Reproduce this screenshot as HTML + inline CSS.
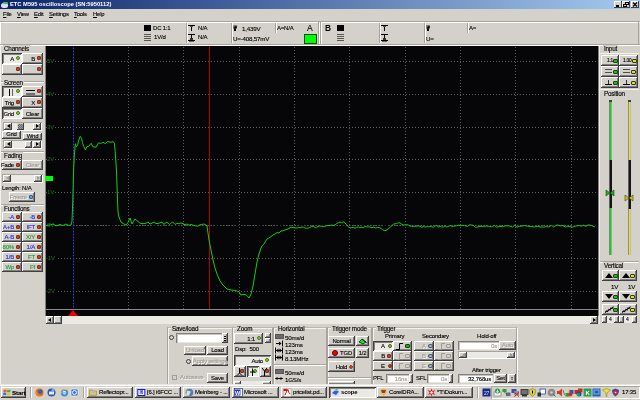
<!DOCTYPE html>
<html><head><meta charset="utf-8">
<style>
*{margin:0;padding:0;box-sizing:border-box}
html,body{width:640px;height:400px;overflow:hidden;background:#d4d1ca;font-family:"Liberation Sans",sans-serif;font-size:6px;letter-spacing:-0.2px;-webkit-text-stroke:0.12px currentColor;color:#000;position:relative}
.a{position:absolute}
#title{left:0;top:0;width:640px;height:9px;background:linear-gradient(90deg,#0a246a 0%,#a6caf0 100%)}
#title .t{left:10px;top:0px;color:#fff;font-weight:bold;font-size:5.75px;line-height:9px;white-space:nowrap;letter-spacing:0px;-webkit-text-stroke:0}
.wb{top:1px;width:8px;height:7px;background:#d4d0c8;box-shadow:inset -1px -1px #404040,inset 1px 1px #fff}
.m{top:8px;line-height:12px;font-size:5.9px;white-space:nowrap}
.hl{height:1px}
.btn{background:#d4d1ca;box-shadow:inset -1px -1px #404040,inset 1px 1px #fff,inset -2px -2px #808080}
.prs{background:#ebe9e4;box-shadow:inset 1px 1px #404040,inset -1px -1px #fff,inset 2px 2px #808080}
.led{width:4px;height:4px;border-radius:1px;background:#f03000;border:1px solid #6a3a30}
.lg{background:#80e000;border-color:#507030;border-radius:50%}
.ly{background:#f0e000;border-color:#707030}
.lb{background:#60a0e0;border-color:#406080}
.lo{background:#d08060;border-color:#a09080}
.gb{border:1px solid #a8a49c;border-top-color:#bcb8b0;box-shadow:inset 1px 1px #f4f2ee,1px 1px #fff}
.lbl{background:#d4d1ca;padding:0 1px;line-height:7px;font-size:6.3px;white-space:nowrap;color:#000}
.vl{color:#1a7a1a;font-size:6px;line-height:7px;-webkit-text-stroke:0;background:#060508;padding-right:1px}
.txt{white-space:nowrap;line-height:7px}
.tb{}
</style></head><body style="will-change:transform">
<div id="title" class="a">
  <div class="a" style="left:1px;top:3px;width:7px;height:5px;border-radius:3px 2px 3px 3px;background:#e0dcf0"></div>
  <div class="a" style="left:3px;top:2px;width:4px;height:2px;background:#6a9ad0;border-radius:1px"></div>
  <div class="a" style="left:5px;top:2px;width:3px;height:2px;background:#20d020;border-radius:1px"></div>
  <div class="a t">ETC M595 oscilloscope (SN:5950112)</div>
  <div class="a wb" style="left:614px"><div class="a" style="left:2px;top:4px;width:3px;height:2px;background:#000"></div></div>
  <div class="a wb" style="left:622px"><div class="a" style="left:3px;top:1px;width:4px;height:3px;border:1px solid #000;border-top-width:1.5px"></div><div class="a" style="left:1px;top:3px;width:4px;height:3px;border:1px solid #000;background:#d4d0c8"></div></div>
  <div class="a wb" style="left:631px"><svg class="a" style="left:1px;top:1px" width="6" height="5"><path d="M1,0.5 L5,4.5 M5,0.5 L1,4.5" stroke="#000" stroke-width="1.1"/></svg></div>
</div>
<div class="a m" style="left:3px"><u>F</u>ile</div>
<div class="a m" style="left:17px"><u>V</u>iew</div>
<div class="a m" style="left:34px"><u>E</u>dit</div>
<div class="a m" style="left:49px"><u>S</u>ettings</div>
<div class="a m" style="left:74px"><u>T</u>ools</div>
<div class="a m" style="left:93px"><u>H</u>elp</div>
<div class="a hl" style="left:0;top:21px;width:640px;background:#a8a49c"></div>
<div class="a hl" style="left:0;top:22px;width:640px;background:#fff"></div>
<div class="a hl" style="left:0;top:44px;width:640px;background:#a8a49c"></div>
<div class="a hl" style="left:0;top:45px;width:640px;background:#fff"></div>
<div class="a" style="left:45px;top:46px;width:1px;height:270px;background:#808080"></div>
<div class="a" style="left:46px;top:46px;width:552px;height:270px;background:#060508"></div>
<svg class="a" style="left:0;top:0" width="640" height="400">
 <g stroke="#5e5c5e" stroke-width="1" stroke-dasharray="1 2" shape-rendering="crispEdges"><line x1="128.5" y1="47" x2="128.5" y2="309"/><line x1="183.5" y1="47" x2="183.5" y2="309"/><line x1="239.5" y1="47" x2="239.5" y2="309"/><line x1="294.5" y1="47" x2="294.5" y2="309"/><line x1="349.5" y1="47" x2="349.5" y2="309"/><line x1="405.5" y1="47" x2="405.5" y2="309"/><line x1="460.5" y1="47" x2="460.5" y2="309"/><line x1="515.5" y1="47" x2="515.5" y2="309"/><line x1="571.5" y1="47" x2="571.5" y2="309"/><line x1="46" y1="61.5" x2="598" y2="61.5"/><line x1="46" y1="94.5" x2="598" y2="94.5"/><line x1="46" y1="127.5" x2="598" y2="127.5"/><line x1="46" y1="159.5" x2="598" y2="159.5"/><line x1="46" y1="192.5" x2="598" y2="192.5"/><line x1="46" y1="225.5" x2="598" y2="225.5"/><line x1="46" y1="258.5" x2="598" y2="258.5"/><line x1="46" y1="291.5" x2="598" y2="291.5"/></g>
 <line x1="73.5" y1="46" x2="73.5" y2="309" stroke="#505050" stroke-width="1"/><line x1="73.5" y1="46" x2="73.5" y2="309" stroke="#1010a8" stroke-width="1" stroke-dasharray="2 1" shape-rendering="crispEdges"/>
 <line x1="46" y1="225.5" x2="598" y2="225.5" stroke="#206020" stroke-width="1" stroke-dasharray="2 5" stroke-dashoffset="1"/><line x1="46" y1="225.5" x2="598" y2="225.5" stroke="#601870" stroke-width="1" stroke-dasharray="1 6" stroke-dashoffset="4"/>
 <line x1="209.5" y1="46" x2="209.5" y2="309" stroke="#b00000" stroke-width="1"/>
 <line x1="46" y1="309.5" x2="598" y2="309.5" stroke="#8a8a8a" stroke-width="1"/>
 <polygon points="73,310 68,316 78,316" fill="#f00000"/>
</svg>
<div class="a vl" style="top:58px;left:47px">5V</div><div class="a vl" style="top:91px;left:47px">4V</div><div class="a vl" style="top:124px;left:47px">3V</div><div class="a vl" style="top:156px;left:47px">2V</div><div class="a vl" style="top:189px;left:47px">1V</div><div class="a vl" style="top:222px;left:47px">0V</div><div class="a vl" style="top:255px;left:46px">-1V</div><div class="a vl" style="top:288px;left:46px">-2V</div>
<svg class="a" style="left:0;top:0" width="640" height="400">
 <polyline points="46.0,225.5 50.0,225.0 53.0,224.0 56.0,226.0 60.0,224.5 63.0,225.5 66.0,224.0 69.0,225.5 71.0,225.0 72.0,221.0 72.8,200.0 73.6,170.0 74.3,156.0 75.0,147.0 75.4,143.7 76.3,146.8 77.6,145.5 78.5,141.0 80.2,136.3 81.6,138.5 82.4,142.4 83.7,146.4 85.5,149.9 86.8,146.8 88.6,146.4 91.2,143.3 92.9,146.8 96.0,147.2 98.6,142.9 101.2,143.3 103.0,142.4 105.6,143.6 107.4,141.6 110.9,142.2 113.1,141.6 114.4,143.3 115.2,151.6 116.5,171.0 117.5,200.0 118.0,211.0 118.4,215.0 119.0,217.0 120.0,219.6 121.0,222.0 123.0,223.5 126.0,225.0 128.0,222.6 130.0,218.0 132.0,224.0 133.5,221.4 135.0,219.0 136.5,220.2 138.0,221.4 139.5,222.7 141.0,223.5 143.0,223.7 145.0,223.5 146.5,222.9 148.0,222.0 150.0,224.0 152.0,223.2 154.0,222.0 156.0,223.5 158.0,223.5 160.0,222.8 162.0,222.0 163.8,224.4 165.3,223.2 166.9,222.2 169.4,224.4 170.9,223.5 172.5,221.9 175.0,224.4 176.9,223.5 178.8,223.5 180.9,223.1 183.1,223.5 185.0,224.8 186.9,224.0 189.1,225.1 191.2,224.4 193.0,225.2 195.2,225.8 197.5,226.2 200.0,224.8 201.9,224.5 203.8,224.0 205.6,224.8 207.0,226.0 209.0,240.0 211.0,250.0 213.0,260.0 215.0,268.0 217.0,274.0 220.0,281.0 223.0,285.0 227.0,289.0 231.0,290.0 235.0,290.4 239.0,291.6 240.6,295.0 245.0,294.4 247.0,295.6 249.0,298.0 251.0,294.0 253.0,286.0 255.0,274.0 257.0,262.0 259.0,254.0 261.0,248.0 262.5,245.1 264.0,244.0 265.5,241.3 267.0,239.0 269.0,238.0 271.0,236.6 273.0,235.0 275.0,234.0 277.0,232.6 279.0,233.0 281.0,231.0 283.0,230.7 285.0,230.0 287.0,229.4 289.0,228.4 291.0,227.2 293.0,227.6 295.0,228.0 297.0,228.0 298.7,227.6 300.3,227.7 302.0,227.0 303.5,227.2 305.0,228.0 306.7,228.2 308.3,228.1 310.0,227.5 311.6,226.4 313.2,226.3 314.8,227.2 316.4,227.5 318.0,226.5 319.8,226.0 321.5,226.3 323.2,226.5 325.0,226.2 326.7,225.7 328.3,225.6 330.0,225.3 331.7,225.2 333.3,225.4 335.0,225.0 336.7,223.6 338.3,222.8 340.0,222.0 341.7,222.8 343.3,221.8 345.0,223.0 346.7,224.8 348.3,226.8 350.0,228.0 351.7,227.6 353.3,227.3 355.0,228.3 356.7,227.2 358.3,227.0 360.0,227.5 361.7,227.3 363.3,227.7 365.0,226.5 366.7,226.8 368.3,226.8 370.0,227.0 371.9,227.7 373.8,227.1 375.6,228.0 377.5,227.5 379.2,227.5 380.9,228.4 382.6,229.6 384.3,230.6 386.0,230.5 388.0,228.9 390.0,227.5 391.7,225.8 393.3,224.3 395.0,223.8 396.7,223.6 398.3,222.7 400.0,223.0 401.7,224.2 403.3,224.9 405.0,225.0 406.7,224.6 408.3,225.0 410.0,226.2 411.7,226.1 413.3,226.6 415.0,226.2 416.7,226.1 418.3,225.8 420.0,226.3 421.7,227.3 423.3,226.5 425.0,227.0 426.7,226.6 428.3,226.7 430.0,226.6 431.7,226.5 433.3,227.3 435.0,225.9 436.7,225.5 438.3,227.1 440.0,226.2 441.7,226.9 443.3,227.0 445.0,225.9 446.7,226.8 448.3,226.7 450.0,225.4 451.7,226.3 453.3,226.4 455.0,226.0 456.7,225.7 458.3,225.2 460.0,225.5 462.0,225.3 464.8,225.7 467.7,226.3 469.8,224.7 473.1,225.4 475.4,227.3 478.1,226.9 480.8,226.4 483.1,226.4 486.4,226.1 489.5,226.4 491.6,226.7 494.5,225.5 496.5,227.0 499.2,226.6 502.5,226.6 505.9,225.7 509.1,225.9 512.5,227.0 514.7,225.1 517.0,227.2 519.7,226.3 522.1,226.0 524.7,225.6 527.6,226.2 530.9,226.5 534.3,226.9 537.8,226.4 540.0,226.9 543.5,227.1 546.3,226.6 548.7,226.9 551.5,225.4 553.6,226.9 557.1,224.9 560.3,225.8 562.5,225.5 565.7,227.0 567.7,226.3 569.8,226.6 572.3,227.0 575.8,226.0 579.3,225.5 581.4,226.3 583.4,225.2 586.1,226.3 588.3,224.8 591.6,225.5 595.0,227.0" fill="none" stroke="#10d010" stroke-width="1"/>
</svg>
<div class="a" style="left:45px;top:176px;width:8px;height:5px;background:#00ff00"></div>
<div class="a lbl" style="left:3px;top:45px">Channels</div><div class="a btn prs" style="left:2px;top:53px;width:20px;height:11px;"><div class="a txt" style="right:8px;top:3px;">A</div><div class="a led lg" style="left:14px;top:3px"></div></div><div class="a btn" style="left:22px;top:53px;width:21px;height:11px;"><div class="a txt" style="right:8px;top:3px;">B</div><div class="a led" style="left:15px;top:3px"></div></div><div class="a btn" style="left:2px;top:64px;width:20px;height:11px;"><div class="a led" style="left:14px;top:3px"></div></div><div class="a btn" style="left:22px;top:64px;width:21px;height:11px;"><div class="a led" style="left:15px;top:3px"></div></div><div class="a " style="left:1px;top:81px;width:43px;height:1px;background:#a8a49c"></div><div class="a " style="left:1px;top:82px;width:43px;height:1px;background:#fff"></div><div class="a lbl" style="left:3px;top:79px">Screen</div><div class="a btn prs" style="left:2px;top:86px;width:20px;height:11px;"><div class="a led lg" style="left:14px;top:3px"></div></div><div class="a " style="left:9px;top:89px;width:1px;height:7px;background:#000"></div><div class="a " style="left:12px;top:89px;width:1px;height:7px;background:#606060"></div><div class="a btn" style="left:22px;top:86px;width:21px;height:11px;"><div class="a led" style="left:15px;top:3px"></div></div><div class="a " style="left:26px;top:90px;width:9px;height:1px;background:#000"></div><div class="a " style="left:26px;top:93px;width:9px;height:2px;background:#707070"></div><div class="a btn" style="left:2px;top:97px;width:20px;height:11px;"><div class="a txt" style="right:8px;top:3px;">Trig</div><div class="a led" style="left:14px;top:3px"></div></div><div class="a btn" style="left:22px;top:97px;width:21px;height:11px;"><div class="a txt" style="right:8px;top:3px;">X</div><div class="a led" style="left:15px;top:3px"></div></div><div class="a btn prs" style="left:2px;top:108px;width:20px;height:11px;"><div class="a txt" style="right:8px;top:3px;">Grid</div><div class="a led lg" style="left:14px;top:3px"></div></div><div class="a btn" style="left:22px;top:108px;width:21px;height:11px;"><div class="a txt" style="left:0;right:0;top:3px;text-align:center;">Clear</div></div><div class="a " style="left:3px;top:122px;width:39px;height:9px;background:#ebe9e4;box-shadow:inset 1px 1px #a8a49c,inset -1px -1px #fff"></div><div class="a btn" style="left:4px;top:123px;width:8px;height:7px;"><div class="a" style="left:3px;top:1px;width:0;height:0;border-top:2px solid transparent;border-bottom:2px solid transparent;border-right:3px solid #000"></div></div><div class="a btn" style="left:33px;top:123px;width:8px;height:7px;"><div class="a" style="left:3px;top:1px;width:0;height:0;border-top:2px solid transparent;border-bottom:2px solid transparent;border-left:3px solid #000"></div></div><div class="a " style="left:17px;top:123px;width:7px;height:7px;background:repeating-conic-gradient(#6a6a6a 0 25%,#9a9a9a 0 50%) 0 0/2px 2px;box-shadow:inset -1px -1px #404040,inset 1px 1px #d0d0d0"></div><div class="a btn" style="left:2px;top:131px;width:19px;height:8px;"><div class="a txt" style="left:0;right:0;top:0;text-align:center">Grid</div></div><div class="a btn" style="left:23px;top:133px;width:19px;height:7px;"><div class="a txt" style="left:0;right:0;top:0;text-align:center">Wnd</div></div><div class="a " style="left:3px;top:140px;width:39px;height:9px;background:#ebe9e4;box-shadow:inset 1px 1px #a8a49c,inset -1px -1px #fff"></div><div class="a btn" style="left:4px;top:141px;width:8px;height:7px;"><div class="a" style="left:3px;top:1px;width:0;height:0;border-top:2px solid transparent;border-bottom:2px solid transparent;border-right:3px solid #000"></div></div><div class="a btn" style="left:33px;top:141px;width:8px;height:7px;"><div class="a" style="left:3px;top:1px;width:0;height:0;border-top:2px solid transparent;border-bottom:2px solid transparent;border-left:3px solid #000"></div></div><div class="a btn" style="left:25px;top:141px;width:7px;height:7px;"></div><div class="a " style="left:1px;top:151px;width:43px;height:1px;background:#a8a49c"></div><div class="a " style="left:1px;top:152px;width:43px;height:1px;background:#fff"></div><div class="a lbl" style="left:3px;top:152px">Fading</div><div class="a btn" style="left:2px;top:160px;width:20px;height:10px;"><div class="a txt" style="right:8px;top:2px;">Fade</div><div class="a led" style="left:14px;top:3px"></div></div><div class="a btn" style="left:22px;top:160px;width:21px;height:10px;"><div class="a txt" style="left:0;right:0;top:2px;text-align:center;color:#a09c94;text-shadow:1px 1px #fff;">Clear</div></div><div class="a " style="left:2px;top:174px;width:41px;height:9px;background:#ebe9e4;box-shadow:inset 1px 1px #a8a49c,inset -1px -1px #fff"></div><div class="a btn" style="left:3px;top:175px;width:8px;height:7px;"><div class="a" style="left:3px;top:1px;width:0;height:0;border-top:2px solid transparent;border-bottom:2px solid transparent;border-right:3px solid #a09c94"></div></div><div class="a btn" style="left:34px;top:175px;width:8px;height:7px;"><div class="a" style="left:3px;top:1px;width:0;height:0;border-top:2px solid transparent;border-bottom:2px solid transparent;border-left:3px solid #a09c94"></div></div><div class="a txt" style="left:2px;top:185px">Length: N/A</div><div class="a btn" style="left:9px;top:192px;width:26px;height:10px;"><div class="a txt" style="right:8px;top:2px;color:#a09c94;text-shadow:1px 1px #fff;">Freeze</div><div class="a led lb" style="left:20px;top:3px"></div></div><div class="a " style="left:1px;top:204px;width:43px;height:1px;background:#a8a49c"></div><div class="a " style="left:1px;top:205px;width:43px;height:1px;background:#fff"></div><div class="a lbl" style="left:3px;top:205px">Functions</div><div class="a btn" style="left:2px;top:212px;width:20px;height:10px;"><div class="a txt" style="right:8px;top:2px;color:#2a2ae8;">-A</div><div class="a led" style="left:14px;top:3px"></div></div><div class="a btn" style="left:22px;top:212px;width:21px;height:10px;"><div class="a txt" style="right:8px;top:2px;color:#2a2ae8;">-B</div><div class="a led" style="left:15px;top:3px"></div></div><div class="a btn" style="left:2px;top:222px;width:20px;height:10px;"><div class="a txt" style="right:8px;top:2px;color:#2a2ae8;">A+B</div><div class="a led" style="left:14px;top:3px"></div></div><div class="a btn" style="left:22px;top:222px;width:21px;height:10px;"><div class="a txt" style="right:8px;top:2px;color:#2a2ae8;">IFT</div><div class="a led" style="left:15px;top:3px"></div></div><div class="a btn" style="left:2px;top:232px;width:20px;height:10px;"><div class="a txt" style="right:8px;top:2px;color:#2a2ae8;">A-B</div><div class="a led" style="left:14px;top:3px"></div></div><div class="a btn" style="left:22px;top:232px;width:21px;height:10px;"><div class="a txt" style="right:8px;top:2px;color:#1f9a2a;">X/Y</div><div class="a led" style="left:15px;top:3px"></div></div><div class="a btn" style="left:2px;top:242px;width:20px;height:10px;"><div class="a txt" style="right:8px;top:2px;color:#1f9a2a;">80%</div><div class="a led" style="left:14px;top:3px"></div></div><div class="a btn" style="left:22px;top:242px;width:21px;height:10px;"><div class="a txt" style="right:8px;top:2px;color:#2a2ae8;">1/A</div><div class="a led" style="left:15px;top:3px"></div></div><div class="a btn" style="left:2px;top:252px;width:20px;height:10px;"><div class="a txt" style="right:8px;top:2px;color:#2a2ae8;">1/B</div><div class="a led" style="left:14px;top:3px"></div></div><div class="a btn" style="left:22px;top:252px;width:21px;height:10px;"><div class="a txt" style="right:8px;top:2px;color:#1f9a2a;">FT</div><div class="a led" style="left:15px;top:3px"></div></div><div class="a btn" style="left:2px;top:262px;width:20px;height:10px;"><div class="a txt" style="right:8px;top:2px;color:#1f9a2a;">Wp</div><div class="a led" style="left:14px;top:3px"></div></div><div class="a btn" style="left:22px;top:262px;width:21px;height:10px;"><div class="a txt" style="right:8px;top:2px;color:#1f9a2a;">Ff</div><div class="a led" style="left:15px;top:3px"></div></div><div class="a " style="left:0px;top:22px;width:1px;height:22px;background:#fff"></div><div class="a " style="left:0px;top:46px;width:1px;height:338px;background:#f4f2ee"></div><div class="a " style="left:186px;top:23px;width:1px;height:20px;background:#a8a49c"></div><div class="a " style="left:187px;top:23px;width:1px;height:20px;background:#fff"></div><div class="a " style="left:231px;top:23px;width:1px;height:20px;background:#a8a49c"></div><div class="a " style="left:232px;top:23px;width:1px;height:20px;background:#fff"></div><div class="a " style="left:275px;top:23px;width:1px;height:10px;background:#a8a49c"></div><div class="a " style="left:276px;top:23px;width:1px;height:10px;background:#fff"></div><div class="a " style="left:318px;top:22px;width:1px;height:22px;background:#a8a49c"></div><div class="a " style="left:319px;top:22px;width:1px;height:22px;background:#fff"></div><div class="a " style="left:320px;top:22px;width:1px;height:22px;background:#a8a49c"></div><div class="a " style="left:321px;top:23px;width:1px;height:21px;background:#fff"></div><div class="a " style="left:379px;top:23px;width:1px;height:20px;background:#a8a49c"></div><div class="a " style="left:380px;top:23px;width:1px;height:20px;background:#fff"></div><div class="a " style="left:424px;top:23px;width:1px;height:20px;background:#a8a49c"></div><div class="a " style="left:425px;top:23px;width:1px;height:20px;background:#fff"></div><div class="a " style="left:467px;top:23px;width:1px;height:10px;background:#a8a49c"></div><div class="a " style="left:468px;top:23px;width:1px;height:10px;background:#fff"></div><div class="a " style="left:638px;top:22px;width:1px;height:22px;background:#a8a49c"></div><div class="a " style="left:144px;top:25px;width:7px;height:6px;background:#000"></div><div class="a " style="left:144px;top:34px;width:7px;height:8px;background:repeating-linear-gradient(180deg,#555 0 1px,transparent 1px 2px)"></div><div class="a txt tb" style="left:153px;top:25px">DC 1:1</div><div class="a txt tb" style="left:154px;top:34px">1V/d</div><div class="a " style="left:188px;top:25px;width:7px;height:1px;background:#000"></div><div class="a " style="left:191px;top:25px;width:1px;height:6px;background:#000"></div><div class="a " style="left:190px;top:26px;width:3px;height:1px;background:#555"></div><div class="a " style="left:188px;top:34px;width:7px;height:1px;background:#000"></div><div class="a " style="left:191px;top:34px;width:1px;height:6px;background:#000"></div><div class="a " style="left:188px;top:40px;width:7px;height:1px;background:#000"></div><div class="a " style="left:189px;top:41px;width:5px;height:1px;background:#666"></div><div class="a " style="left:190px;top:38px;width:3px;height:2px;background:#333"></div><div class="a txt tb" style="left:198px;top:25px">N/A</div><div class="a txt tb" style="left:198px;top:34px">N/A</div><div class="a " style="left:233px;top:25px;width:4px;height:4px;border-radius:50%;background:#000;box-shadow:inset 1px 1px #888"></div><div class="a " style="left:234px;top:29px;width:2px;height:2px;background:#000"></div><div class="a txt" style="left:242px;top:25px;font-size:6.2px">1,439V</div><div class="a txt" style="left:233px;top:35px;font-size:6.2px">U=-408,57mV</div><div class="a txt" style="left:277px;top:25px">A=N/A</div><div class="a" style="left:307px;top:24px;font-size:8.6px;line-height:9px;letter-spacing:0;-webkit-text-stroke:0.1px #000">A</div><div class="a " style="left:304px;top:34px;width:13px;height:10px;background:#00ff00;border:1px solid #1a4a1a"></div><div class="a" style="left:325px;top:24px;font-size:8.4px;line-height:9px;font-weight:bold;letter-spacing:0;-webkit-text-stroke:0">B</div><div class="a " style="left:337px;top:25px;width:7px;height:6px;background:#000"></div><div class="a " style="left:337px;top:34px;width:7px;height:8px;background:repeating-linear-gradient(180deg,#555 0 1px,transparent 1px 2px)"></div><div class="a " style="left:381px;top:25px;width:7px;height:1px;background:#000"></div><div class="a " style="left:384px;top:25px;width:1px;height:6px;background:#000"></div><div class="a " style="left:383px;top:26px;width:3px;height:1px;background:#555"></div><div class="a " style="left:381px;top:34px;width:7px;height:1px;background:#000"></div><div class="a " style="left:384px;top:34px;width:1px;height:6px;background:#000"></div><div class="a " style="left:381px;top:40px;width:7px;height:1px;background:#000"></div><div class="a " style="left:382px;top:41px;width:5px;height:1px;background:#666"></div><div class="a " style="left:383px;top:38px;width:3px;height:2px;background:#333"></div><div class="a " style="left:426px;top:25px;width:4px;height:4px;border-radius:50%;background:#000;box-shadow:inset 1px 1px #888"></div><div class="a " style="left:427px;top:29px;width:2px;height:2px;background:#000"></div><div class="a txt" style="left:426px;top:35px;font-size:6.2px">U=</div><div class="a txt" style="left:469px;top:25px">A=</div><div class="a " style="left:598px;top:46px;width:1px;height:270px;background:#808080"></div><div class="a " style="left:599px;top:46px;width:1px;height:278px;background:#f0eee8"></div><div class="a lbl" style="left:603px;top:45px">Input</div><div class="a " style="left:600px;top:53px;width:39px;height:1px;background:#f4f2ee"></div><div class="a btn" style="left:601px;top:55px;width:18px;height:11px;"></div><div class="a txt" style="left:607px;top:57px;font-size:4.8px">1:1</div><div class="a " style="left:613px;top:59px;width:5px;height:4px;background:#00d000;border:1px solid #303820;border-radius:1px"></div><div class="a btn" style="left:619px;top:55px;width:19px;height:11px;"></div><div class="a txt" style="left:623px;top:57px;font-size:4.8px">1:30</div><div class="a " style="left:632px;top:59px;width:5px;height:4px;background:#e8e000;border:1px solid #303820;border-radius:1px"></div><div class="a btn" style="left:601px;top:66px;width:18px;height:11px;"></div><div class="a " style="left:613px;top:70px;width:5px;height:4px;background:#00d000;border:1px solid #303820;border-radius:1px"></div><div class="a btn" style="left:619px;top:66px;width:19px;height:11px;"></div><div class="a " style="left:631px;top:70px;width:5px;height:4px;background:#e8e000;border:1px solid #303820;border-radius:1px"></div><div class="a btn" style="left:601px;top:77px;width:18px;height:11px;"></div><div class="a " style="left:613px;top:81px;width:5px;height:4px;background:#00d000;border:1px solid #303820;border-radius:1px"></div><div class="a btn" style="left:619px;top:77px;width:19px;height:11px;"></div><div class="a " style="left:631px;top:81px;width:5px;height:4px;background:#e8e000;border:1px solid #303820;border-radius:1px"></div><div class="a " style="left:605px;top:69px;width:7px;height:1px;background:#505050"></div><div class="a " style="left:605px;top:72px;width:7px;height:1px;background:#505050"></div><div class="a " style="left:605px;top:84px;width:7px;height:1px;background:#000"></div><div class="a " style="left:608px;top:80px;width:1px;height:4px;background:#303030"></div><div class="a " style="left:623px;top:69px;width:7px;height:1px;background:#505050"></div><div class="a " style="left:623px;top:72px;width:7px;height:1px;background:#505050"></div><div class="a " style="left:623px;top:84px;width:7px;height:1px;background:#000"></div><div class="a " style="left:626px;top:80px;width:1px;height:4px;background:#303030"></div><div class="a " style="left:600px;top:89px;width:39px;height:1px;background:#f4f2ee"></div><div class="a lbl" style="left:603px;top:90px">Position</div><div class="a " style="left:609px;top:100px;width:3px;height:155px;background:#00e000;border-left:1px solid #709070;border-right:1px solid #90b090"></div><div class="a " style="left:609px;top:100px;width:3px;height:2px;background:#404040"></div><div class="a " style="left:609px;top:160px;width:3px;height:48px;background:#151515;border-left:1px solid #606060"></div><div class="a " style="left:628px;top:100px;width:3px;height:155px;background:#e8e040;border-left:1px solid #909070;border-right:1px solid #c0c090"></div><div class="a " style="left:628px;top:100px;width:3px;height:2px;background:#404040"></div><div class="a " style="left:628px;top:160px;width:3px;height:49px;background:#151515;border-left:1px solid #606060"></div><svg class="a" style="left:604px;top:188px" width="12" height="10"><path d="M2,2 L6,5 L2,8 Z M10,2 L6,5 L10,8 Z" fill="#20b020" stroke="#204020" stroke-width="0.6"/></svg><svg class="a" style="left:623px;top:193px" width="12" height="10"><path d="M2,2 L6,5 L2,8 Z M10,2 L6,5 L10,8 Z" fill="#d0c020" stroke="#404020" stroke-width="0.6"/></svg><div class="a " style="left:600px;top:261px;width:39px;height:1px;background:#a8a49c"></div><div class="a " style="left:600px;top:262px;width:39px;height:1px;background:#fff"></div><div class="a lbl" style="left:603px;top:262px">Vertical</div><div class="a btn" style="left:602px;top:270px;width:17px;height:11px;"></div><div class="a " style="left:613px;top:274px;width:5px;height:4px;background:#00d000;border:1px solid #303820;border-radius:1px"></div><div class="a " style="left:605px;top:273px;width:0px;height:0px;border-left:4px solid transparent;border-right:4px solid transparent;border-bottom:5px solid #000"></div><div class="a txt" style="left:611px;top:283px;font-size:6.2px">1V</div><div class="a btn" style="left:602px;top:291px;width:17px;height:11px;"></div><div class="a " style="left:613px;top:295px;width:5px;height:4px;background:#00d000;border:1px solid #303820;border-radius:1px"></div><div class="a " style="left:605px;top:294px;width:0px;height:0px;border-left:4px solid transparent;border-right:4px solid transparent;border-top:5px solid #000"></div><div class="a btn" style="left:602px;top:304px;width:17px;height:11px;"></div><div class="a " style="left:613px;top:308px;width:5px;height:4px;background:#00d000;border:1px solid #303820;border-radius:1px"></div><svg class="a" style="left:605px;top:306px" width="9" height="7"><path d="M0,6.5 L1.5,5 L2.5,5.5 L4,3.5 L5,4 L6,2 L7,2.5 L8.5,0.5" fill="none" stroke="#000" stroke-width="1.1"/></svg><div class="a " style="left:602px;top:316px;width:17px;height:7px;background:#ebe9e4"></div><div class="a btn" style="left:602px;top:316px;width:5px;height:7px;"></div><div class="a btn" style="left:614px;top:316px;width:5px;height:7px;"></div><div class="a txt" style="left:609px;top:316px;font-size:5px">4</div><div class="a btn" style="left:619px;top:270px;width:18px;height:11px;"></div><div class="a " style="left:630px;top:274px;width:5px;height:4px;background:#e8e000;border:1px solid #303820;border-radius:1px"></div><div class="a " style="left:622px;top:273px;width:0px;height:0px;border-left:4px solid transparent;border-right:4px solid transparent;border-bottom:5px solid #000"></div><div class="a txt" style="left:628px;top:283px;font-size:6.2px">1V</div><div class="a btn" style="left:619px;top:291px;width:18px;height:11px;"></div><div class="a " style="left:630px;top:295px;width:5px;height:4px;background:#e8e000;border:1px solid #303820;border-radius:1px"></div><div class="a " style="left:622px;top:294px;width:0px;height:0px;border-left:4px solid transparent;border-right:4px solid transparent;border-top:5px solid #000"></div><div class="a btn" style="left:619px;top:304px;width:18px;height:11px;"></div><div class="a " style="left:630px;top:308px;width:5px;height:4px;background:#e8e000;border:1px solid #303820;border-radius:1px"></div><svg class="a" style="left:622px;top:306px" width="9" height="7"><path d="M0,6.5 L1.5,5 L2.5,5.5 L4,3.5 L5,4 L6,2 L7,2.5 L8.5,0.5" fill="none" stroke="#000" stroke-width="1.1"/></svg><div class="a " style="left:619px;top:316px;width:18px;height:7px;background:#ebe9e4"></div><div class="a btn" style="left:619px;top:316px;width:5px;height:7px;"></div><div class="a btn" style="left:632px;top:316px;width:5px;height:7px;"></div><div class="a txt" style="left:626px;top:316px;font-size:5px">4</div><div class="a " style="left:46px;top:316px;width:552px;height:8px;background:#ebe9e4"></div><div class="a btn" style="left:46px;top:316px;width:8px;height:8px;"><div class="a" style="left:2px;top:2px;width:0;height:0;border-top:2px solid transparent;border-bottom:2px solid transparent;border-right:3px solid #000"></div></div><div class="a btn" style="left:54px;top:316px;width:8px;height:8px;"></div><div class="a btn" style="left:590px;top:316px;width:8px;height:8px;"><div class="a" style="left:3px;top:2px;width:0;height:0;border-top:2px solid transparent;border-bottom:2px solid transparent;border-left:3px solid #000"></div></div><div class="a gb" style="left:167px;top:327px;width:66px;height:62px;"></div><div class="a lbl" style="left:171px;top:325px">Save/load</div><div class="a " style="left:169px;top:335px;width:5px;height:5px;border-radius:50%;border:1px solid #404040;background:#d4d1ca"></div><div class="a " style="left:176px;top:333px;width:46px;height:10px;background:#fff;box-shadow:inset 1px 1px #808080,inset 2px 2px #c8c4bc,inset -1px -1px #e8e6e0"><div class="a txt" style="left:2px;right:2px;top:2px;text-align:right;"></div></div><div class="a btn" style="left:222px;top:333px;width:6px;height:10px;"></div><div class="a " style="left:224px;top:336px;width:2px;height:1px;background:#000"></div><div class="a " style="left:224px;top:338px;width:2px;height:1px;background:#000"></div><div class="a " style="left:224px;top:340px;width:2px;height:1px;background:#000"></div><div class="a btn" style="left:184px;top:346px;width:22px;height:9px;"><div class="a txt" style="left:0;right:0;top:1px;text-align:center;color:#a09c94;text-shadow:1px 1px #fff;">Unload</div></div><div class="a btn" style="left:207px;top:346px;width:21px;height:9px;"><div class="a txt" style="left:0;right:0;top:1px;text-align:center;">Load</div></div><div class="a " style="left:186px;top:359px;width:5px;height:5px;border-radius:50%;border:1px solid #404040;background:#d4d1ca"></div><div class="a btn" style="left:192px;top:356px;width:36px;height:10px;"><div class="a txt" style="left:0;right:0;top:2px;text-align:center;color:#a09c94;text-shadow:1px 1px #fff;">Apply settings</div></div><div class="a " style="left:172px;top:375px;width:5px;height:5px;border:1px solid #a09c94;background:#d4d1ca"></div><div class="a txt" style="left:180px;top:374px;color:#a09c94;text-shadow:1px 1px #fff">Autosave</div><div class="a btn" style="left:207px;top:373px;width:21px;height:10px;"><div class="a txt" style="left:0;right:0;top:2px;text-align:center;">Save</div></div><div class="a gb" style="left:232px;top:327px;width:41px;height:62px;"></div><div class="a lbl" style="left:236px;top:325px">Zoom</div><div class="a btn" style="left:234px;top:333px;width:29px;height:11px;"><div class="a txt" style="right:8px;top:3px;">1:1</div><div class="a led lg" style="left:23px;top:3px"></div></div><div class="a btn" style="left:265px;top:333px;width:6px;height:5px;"></div><div class="a btn" style="left:265px;top:338px;width:6px;height:5px;"></div><div class="a txt" style="left:235px;top:346px">Dsp:&nbsp; 500</div><div class="a btn prs" style="left:234px;top:355px;width:37px;height:11px;"><div class="a txt" style="right:8px;top:3px;">Auto</div><div class="a led lg" style="left:31px;top:3px"></div></div><div class="a btn" style="left:234px;top:366px;width:12px;height:11px;"><div class="a led" style="left:6px;top:3px"></div></div><div class="a btn prs" style="left:247px;top:366px;width:12px;height:11px;"><div class="a led lg" style="left:6px;top:3px"></div></div><div class="a btn" style="left:260px;top:366px;width:11px;height:11px;"><div class="a led" style="left:5px;top:3px"></div></div><svg class="a" style="left:234px;top:366px" width="38" height="11"><path d="M5.5,2 L5.5,7 L3,9.5 M5.5,7 L8,9.5" stroke="#000" stroke-width="1" fill="none"/><path d="M18.5,2.5 L18.5,10 M16,6 L21,6" stroke="#000" stroke-width="1" fill="none"/><path d="M28,2 L30.5,5 L33,2 M30.5,5 L30.5,10" stroke="#000" stroke-width="1" fill="none"/></svg><div class="a " style="left:234px;top:381px;width:38px;height:4px;background:#ebe9e4"></div><div class="a btn" style="left:234px;top:381px;width:7px;height:4px;"></div><div class="a btn" style="left:262px;top:381px;width:9px;height:4px;"></div><div class="a gb" style="left:273px;top:327px;width:54px;height:62px;"></div><div class="a lbl" style="left:277px;top:325px">Horizontal</div><div class="a " style="left:275px;top:334px;width:9px;height:5px;background:#6a6a6a;border:1px solid #555"></div><div class="a txt" style="left:285px;top:334px;font-size:6.2px">50ms/d</div><svg class="a" style="left:275px;top:340px" width="9" height="7"><path d="M1,3.5 L5,3.5" stroke="#000" stroke-width="1"/><path d="M4,1.5 L6.5,3.5 L4,5.5Z" fill="#000"/><path d="M7.5,0.5 L7.5,6.5" stroke="#000" stroke-width="1"/></svg><div class="a txt" style="left:285px;top:341px;font-size:6.2px">123ms</div><svg class="a" style="left:275px;top:347px" width="9" height="7"><path d="M0.5,0.5 L0.5,6.5 M7.5,0.5 L7.5,6.5 M1,3.5 L7,3.5" stroke="#000" stroke-width="1"/><path d="M1,3.5 L3.5,1.5 L3.5,5.5Z M7,3.5 L4.5,1.5 L4.5,5.5Z" fill="#000"/></svg><div class="a txt" style="left:285px;top:348px;font-size:6.2px">123ms</div><svg class="a" style="left:275px;top:354px" width="9" height="7"><path d="M0.5,0.5 L0.5,6.5 M7.5,0.5 L7.5,6.5 M1,3.5 L7,3.5" stroke="#000" stroke-width="1"/><path d="M1,3.5 L3.5,1.5 L3.5,5.5Z M7,3.5 L4.5,1.5 L4.5,5.5Z" fill="#000"/></svg><div class="a txt" style="left:285px;top:355px;font-size:6.2px">8.13MHz</div><div class="a " style="left:275px;top:369px;width:9px;height:5px;background:#6a6a6a;border:1px solid #555"></div><div class="a txt" style="left:285px;top:369px;font-size:6.2px">50ms/d</div><svg class="a" style="left:275px;top:375px" width="9" height="7"><path d="M0.5,3.5 L7.5,3.5" stroke="#000" stroke-width="1"/><path d="M0,3.5 L2.5,2 L2.5,5Z M8,3.5 L5.5,2 L5.5,5Z" fill="#000"/></svg><div class="a txt" style="left:285px;top:376px;font-size:6.2px">1GS/s</div><div class="a " style="left:274px;top:364px;width:52px;height:1px;background:#a8a49c"></div><div class="a " style="left:274px;top:365px;width:52px;height:1px;background:#fff"></div><div class="a gb" style="left:327px;top:327px;width:45px;height:62px;"></div><div class="a lbl" style="left:331px;top:325px">Trigger mode</div><div class="a btn" style="left:328px;top:336px;width:27px;height:10px;"><div class="a txt" style="left:0;right:0;top:2px;text-align:center;">Normal</div></div><div class="a btn" style="left:356px;top:336px;width:13px;height:10px;"></div><svg class="a" style="left:358px;top:337px" width="10" height="8"><path d="M1,5 L4,2 L8,5 L5,7 Z" fill="#20e020" stroke="#000" stroke-width="0.7"/><path d="M4,2 L9,6" stroke="#000" stroke-width="0.7"/></svg><div class="a btn" style="left:328px;top:348px;width:27px;height:10px;"><div class="a txt" style="left:12px;top:2px;">TGD</div></div><div class="a " style="left:332px;top:350px;width:6px;height:6px;border-radius:50%;background:#f00000;border:1px solid #600"></div><div class="a btn" style="left:356px;top:348px;width:13px;height:10px;"><div class="a txt" style="left:0;right:0;top:2px;text-align:center;">1/2</div></div><div class="a btn" style="left:328px;top:361px;width:27px;height:11px;"><div class="a txt" style="left:0;right:0;top:3px;text-align:center;">Hold</div></div><div class="a " style="left:349px;top:365px;width:4px;height:4px;border-radius:50%;background:#f03000;border:1px solid #8a4a30"></div><div class="a " style="left:328px;top:377px;width:43px;height:1px;background:#a8a49c"></div><div class="a " style="left:328px;top:378px;width:43px;height:1px;background:#fff"></div><div class="a btn" style="left:328px;top:381px;width:27px;height:4px;"></div><div class="a gb" style="left:372px;top:327px;width:145px;height:62px;"></div><div class="a lbl" style="left:376px;top:325px">Trigger</div><div class="a txt" style="left:385px;top:333px">Primary</div><div class="a txt" style="left:422px;top:333px">Secondary</div><div class="a btn prs" style="left:373px;top:341px;width:20px;height:10px;"><div class="a txt" style="left:0;right:0;top:2px;text-align:center;">A</div></div><div class="a " style="left:388px;top:344px;width:4px;height:4px;border-radius:50%;background:#90d000;border:1px solid #506030"></div><div class="a btn" style="left:393px;top:341px;width:19px;height:10px;"></div><svg class="a" style="left:396px;top:342px" width="8" height="8"><path d="M0,7.5 L3.5,7.5 L3.5,1.5 L7,1.5" stroke="#000" stroke-width="1" fill="none"/></svg><div class="a " style="left:405px;top:344px;width:5px;height:4px;background:#00c000;border:1px solid #204020;border-radius:1px"></div><div class="a btn" style="left:373px;top:351px;width:20px;height:10px;"><div class="a txt" style="right:8px;top:2px;">B</div><div class="a led" style="left:14px;top:3px"></div></div><div class="a btn" style="left:393px;top:351px;width:19px;height:10px;"></div><svg class="a" style="left:396px;top:352px" width="8" height="8"><path d="M0,7.5 L3.5,7.5 L3.5,1.5 L7,1.5" stroke="#a09c94" stroke-width="1" fill="none"/></svg><div class="a " style="left:405px;top:354px;width:5px;height:4px;background:#d4d1ca;border:1px solid #a09c94;border-radius:1px"></div><div class="a btn" style="left:373px;top:361px;width:20px;height:10px;"><div class="a txt" style="left:0;right:0;top:2px;text-align:center;">E</div></div><div class="a " style="left:388px;top:364px;width:4px;height:4px;border-radius:50%;background:#f03000;border:1px solid #6a3a30"></div><div class="a btn" style="left:393px;top:361px;width:19px;height:10px;"></div><svg class="a" style="left:396px;top:362px" width="8" height="8"><path d="M0,7.5 L3.5,7.5 L3.5,1.5 L7,1.5" stroke="#a09c94" stroke-width="1" fill="none"/></svg><div class="a " style="left:405px;top:364px;width:5px;height:4px;background:#d4d1ca;border:1px solid #a09c94;border-radius:1px"></div><div class="a btn" style="left:414px;top:341px;width:20px;height:10px;"><div class="a txt" style="left:0;right:0;top:2px;text-align:center;color:#a09c94;text-shadow:1px 1px #fff;">A</div></div><div class="a " style="left:428px;top:344px;width:5px;height:4px;border-radius:50%;background:#a0c8f0;border:1px solid #404850"></div><div class="a btn" style="left:434px;top:341px;width:20px;height:10px;"></div><svg class="a" style="left:438px;top:342px" width="8" height="8"><path d="M0,7.5 L3.5,7.5 L3.5,1.5 L7,1.5" stroke="#a09c94" stroke-width="1" fill="none"/></svg><div class="a " style="left:446px;top:344px;width:5px;height:4px;background:#d4d1ca;border:1px solid #a09c94;border-radius:1px"></div><div class="a btn" style="left:414px;top:351px;width:20px;height:10px;"><div class="a txt" style="left:0;right:0;top:2px;text-align:center;color:#a09c94;text-shadow:1px 1px #fff;">B</div></div><div class="a " style="left:428px;top:354px;width:5px;height:4px;border-radius:50%;background:#a0c8f0;border:1px solid #404850"></div><div class="a btn" style="left:434px;top:351px;width:20px;height:10px;"></div><svg class="a" style="left:438px;top:352px" width="8" height="8"><path d="M0,7.5 L3.5,7.5 L3.5,1.5 L7,1.5" stroke="#a09c94" stroke-width="1" fill="none"/></svg><div class="a " style="left:446px;top:354px;width:5px;height:4px;background:#d4d1ca;border:1px solid #a09c94;border-radius:1px"></div><div class="a btn" style="left:414px;top:361px;width:20px;height:10px;"><div class="a txt" style="left:0;right:0;top:2px;text-align:center;color:#a09c94;text-shadow:1px 1px #fff;">E</div></div><div class="a " style="left:428px;top:364px;width:5px;height:4px;border-radius:50%;background:#a0c8f0;border:1px solid #404850"></div><div class="a btn" style="left:434px;top:361px;width:20px;height:10px;"></div><svg class="a" style="left:438px;top:362px" width="8" height="8"><path d="M0,7.5 L3.5,7.5 L3.5,1.5 L7,1.5" stroke="#a09c94" stroke-width="1" fill="none"/></svg><div class="a " style="left:446px;top:364px;width:5px;height:4px;background:#d4d1ca;border:1px solid #a09c94;border-radius:1px"></div><div class="a txt" style="left:373px;top:375px">PFL</div><div class="a " style="left:386px;top:374px;width:23px;height:9px;background:#fff;box-shadow:inset 1px 1px #808080,inset 2px 2px #c8c4bc,inset -1px -1px #e8e6e0"><div class="a txt" style="left:2px;right:2px;top:2px;text-align:right;color:#a09c94;">16ns</div></div><div class="a btn" style="left:409px;top:374px;width:4px;height:9px;"></div><div class="a txt" style="left:416px;top:375px">SFL</div><div class="a " style="left:427px;top:374px;width:22px;height:9px;background:#fff;box-shadow:inset 1px 1px #808080,inset 2px 2px #c8c4bc,inset -1px -1px #e8e6e0"><div class="a txt" style="left:2px;right:2px;top:2px;text-align:right;color:#a09c94;">0s</div></div><div class="a btn" style="left:449px;top:374px;width:4px;height:9px;"></div><div class="a txt" style="left:477px;top:333px">Hold-off</div><div class="a " style="left:458px;top:341px;width:41px;height:9px;background:#fff;box-shadow:inset 1px 1px #808080,inset 2px 2px #c8c4bc,inset -1px -1px #e8e6e0"><div class="a txt" style="left:2px;right:2px;top:2px;text-align:right;color:#a09c94;">0s</div></div><div class="a btn" style="left:499px;top:341px;width:17px;height:9px;"><div class="a txt" style="left:0;right:0;top:1px;text-align:center;color:#a09c94;text-shadow:1px 1px #fff;">Auto</div></div><div class="a " style="left:458px;top:351px;width:58px;height:8px;background:#ebe9e4;box-shadow:inset 1px 1px #a8a49c,inset -1px -1px #fff"></div><div class="a btn" style="left:459px;top:352px;width:8px;height:6px;"><div class="a" style="left:3px;top:1px;width:0;height:0;border-top:2px solid transparent;border-bottom:2px solid transparent;border-right:3px solid #a09c94"></div></div><div class="a btn" style="left:507px;top:352px;width:8px;height:6px;"><div class="a" style="left:3px;top:1px;width:0;height:0;border-top:2px solid transparent;border-bottom:2px solid transparent;border-left:3px solid #a09c94"></div></div><div class="a txt" style="left:472px;top:367px">After trigger</div><div class="a " style="left:458px;top:374px;width:35px;height:9px;background:#fff;box-shadow:inset 1px 1px #808080,inset 2px 2px #c8c4bc,inset -1px -1px #e8e6e0"><div class="a txt" style="left:2px;right:2px;top:2px;text-align:right;">32,768us</div></div><div class="a btn" style="left:494px;top:374px;width:13px;height:9px;"><div class="a txt" style="left:0;right:0;top:1px;text-align:center;">Set</div></div><div class="a btn" style="left:508px;top:374px;width:8px;height:9px;"><div class="a txt" style="left:0;right:0;top:1px;text-align:center;font-size:5px;">&#8597;</div></div><div class="a " style="left:0px;top:384px;width:640px;height:16px;background:#d4d1ca;box-shadow:inset 0 1px #e8e6e0,inset 0 2px #fff"></div><div class="a btn" style="left:1px;top:387px;width:25px;height:11px;"></div><svg class="a" style="left:3px;top:389px" width="8" height="7"><path d="M0.5,1 Q2,0 3.6,0.8 L3.4,3.2 Q2,2.6 0.5,3.2Z" fill="#f05a20"/><path d="M4.2,0.8 Q5.8,1.4 7.5,0.6 L7.3,3 Q5.8,3.6 4,3.1Z" fill="#40b040"/><path d="M0.3,3.7 Q2,3.1 3.3,3.7 L3.1,6.2 Q1.8,5.6 0.1,6.2Z" fill="#3a70e0"/><path d="M3.9,3.7 Q5.6,4.2 7.2,3.5 L7,6 Q5.5,6.6 3.7,6.1Z" fill="#f0c020"/></svg><div class="a txt" style="left:12px;top:389px;font-weight:bold;font-size:6.2px;letter-spacing:-0.1px">Start</div><div class="a " style="left:30px;top:387px;width:1px;height:11px;background:#a8a49c"></div><div class="a " style="left:31px;top:387px;width:1px;height:11px;background:#fff"></div><svg class="a" style="left:35px;top:388px" width="9" height="9"><circle cx="4.5" cy="4.5" r="4" fill="#e86a10"/><circle cx="5.2" cy="3.8" r="2.3" fill="#3a5ac0"/><path d="M1,3 Q2,7 6,8 Q2,8 0.8,4.5Z" fill="#f0a020"/></svg><svg class="a" style="left:47px;top:388px" width="9" height="9"><circle cx="4.5" cy="4.5" r="4" fill="#2a5ab0"/><rect x="2" y="3.5" width="5" height="3" fill="#e8e8f0"/><circle cx="6" cy="2.5" r="1.5" fill="#80b0e0"/></svg><svg class="a" style="left:60px;top:388px" width="9" height="9"><circle cx="4.5" cy="4.8" r="3.6" fill="#3a8ae0"/><circle cx="4.5" cy="4.8" r="1.8" fill="#fff"/><rect x="2.5" y="4.5" width="4" height="0.9" fill="#3a8ae0"/><path d="M0.5,6 Q4,0 8.5,2" stroke="#f0c040" stroke-width="0.8" fill="none"/></svg><svg class="a" style="left:70px;top:388px" width="9" height="9"><rect x="1" y="1" width="7" height="7" rx="1" fill="#3a7ad8" stroke="#fff" stroke-width="0.6"/><circle cx="4.5" cy="4.5" r="2" fill="none" stroke="#fff" stroke-width="0.9"/></svg><div class="a " style="left:83px;top:387px;width:1px;height:11px;background:#a8a49c"></div><div class="a " style="left:84px;top:387px;width:1px;height:11px;background:#fff"></div><div class="a btn" style="left:87px;top:387px;width:46px;height:11px;"></div><svg class="a" style="left:89px;top:388px" width="9" height="9"><path d="M0.5,2 L3,2 L4,3 L7.5,3 L7.5,7.5 L0.5,7.5Z" fill="#f0c040" stroke="#a07010" stroke-width="0.5"/><rect x="2" y="3.5" width="4" height="3" fill="#a0c8f0"/></svg><div class="a txt" style="left:99px;top:389px;">Reflectopr...</div><div class="a btn" style="left:135px;top:387px;width:46px;height:11px;"></div><svg class="a" style="left:137px;top:388px" width="9" height="9"><rect x="0.3" y="1" width="8" height="7" fill="#1020d0"/><rect x="1.3" y="2" width="6" height="5" fill="#fff"/><text x="4.3" y="6.3" font-size="4.6" font-weight="bold" text-anchor="middle" fill="#1020d0" font-family="Liberation Sans">I6</text></svg><div class="a txt" style="left:147px;top:389px;">[6.] i6FCC ...</div><div class="a btn" style="left:183px;top:387px;width:47px;height:11px;"></div><svg class="a" style="left:185px;top:388px" width="9" height="9"><circle cx="4.5" cy="4.5" r="3.8" fill="#4a80c0"/><path d="M1.5,3 Q4,2 6,4 Q4,6 2,6Z" fill="#f0e0a0"/><circle cx="3" cy="6" r="1.8" fill="#e0e0e0"/></svg><div class="a txt" style="left:195px;top:389px;">Meinberg - ...</div><div class="a btn" style="left:232px;top:387px;width:47px;height:11px;"></div><svg class="a" style="left:234px;top:388px" width="9" height="9"><rect x="0.5" y="0.5" width="8" height="8" fill="#fff" stroke="#20309a" stroke-width="0.7"/><rect x="0.5" y="1.5" width="6" height="6" fill="#2040a0"/><text x="3.5" y="6.5" font-size="5.5" font-weight="bold" text-anchor="middle" fill="#fff" font-family="Liberation Sans">W</text></svg><div class="a txt" style="left:244px;top:389px;">Microsoft ...</div><div class="a btn" style="left:281px;top:387px;width:46px;height:11px;"></div><svg class="a" style="left:283px;top:388px" width="9" height="9"><rect x="1" y="0.5" width="7" height="8" fill="#fff" stroke="#909090" stroke-width="0.5"/><path d="M2,7 Q4,2 5,1.5 Q5.5,5 7,6" stroke="#e01010" stroke-width="1" fill="none"/><rect x="0.5" y="1" width="4" height="2" fill="#e01010"/></svg><div class="a txt" style="left:293px;top:389px;">pricelist.pd...</div><div class="a btn prs" style="left:329px;top:387px;width:47px;height:11px;"></div><svg class="a" style="left:331px;top:388px" width="9" height="9"><circle cx="4.5" cy="4.5" r="3.8" fill="#d0d8f0"/><path d="M1,5 L4,2.5 L8,3.5 L5,7Z" fill="#3060c0"/><path d="M4,1 L7,1.5 L6,3Z" fill="#20c040"/></svg><div class="a txt" style="left:341px;top:389px;font-weight:bold;-webkit-text-stroke:0;">scope</div><div class="a btn" style="left:377px;top:387px;width:47px;height:11px;"></div><svg class="a" style="left:379px;top:388px" width="9" height="9"><path d="M4.5,0.5 Q8.5,1 7.5,5 L4.5,8 L1.5,5 Q0.5,1 4.5,0.5Z" fill="#f0c020"/><path d="M2,2 L7,2 L6,5 L3,5Z" fill="#e02020"/><path d="M3,3 L6,3 L5,5 L4,5Z" fill="#2050e0"/></svg><div class="a txt" style="left:389px;top:389px;">CorelDRA...</div><div class="a btn" style="left:425px;top:387px;width:48px;height:11px;"></div><svg class="a" style="left:427px;top:388px" width="9" height="9"><path d="M4.5,0.5 L5.5,3 L8.5,2 L6.3,4.5 L8.5,7 L5.3,6 L4.5,8.5 L3.5,6 L0.5,7 L2.7,4.5 L0.5,2 L3.5,3Z" fill="#e01818"/><circle cx="4.5" cy="4.5" r="1.2" fill="#fff"/></svg><div class="a txt" style="left:437px;top:389px;">*T:\Dokum...</div><div class="a " style="left:477px;top:387px;width:1px;height:11px;background:#a8a49c"></div><div class="a " style="left:478px;top:387px;width:1px;height:11px;background:#fff"></div><svg class="a" style="left:482px;top:388px" width="9" height="9"><rect x="0.5" y="0.5" width="8" height="8" fill="#1a2a8a"/><text x="4.5" y="6.5" font-size="5" text-anchor="middle" fill="#e0e0ff" font-family="Liberation Sans">27</text></svg><div class="a " style="left:491px;top:386px;width:149px;height:13px;box-shadow:inset 1px 1px #a8a49c,inset -1px -1px #fff"></div><svg class="a" style="left:493px;top:388px" width="9" height="9"><rect x="1" y="4" width="7" height="4" fill="#f0f0f0" stroke="#606060" stroke-width="0.5"/><circle cx="4.5" cy="3" r="2.5" fill="#20a040"/><path d="M4.5,1.5 L4.5,4.5 M3,3.3 L4.5,4.5 L6,3.3" stroke="#fff" stroke-width="0.7" fill="none"/></svg><svg class="a" style="left:502px;top:388px" width="9" height="9"><rect x="0.5" y="1" width="4" height="3" fill="#30a030"/><rect x="4" y="4.5" width="4.5" height="3.5" fill="#606a7a"/><path d="M2,4 L5,6" stroke="#304050" stroke-width="0.6"/></svg><svg class="a" style="left:511px;top:388px" width="9" height="9"><rect x="0.5" y="1" width="5" height="4" fill="#3a4ab0"/><rect x="3" y="3" width="5" height="4" fill="#8090a0"/><path d="M3.5,4.5 L8,8.5 M8,4.5 L3.5,8.5" stroke="#e01010" stroke-width="1"/></svg><svg class="a" style="left:520px;top:388px" width="9" height="9"><rect x="0.5" y="1" width="8" height="6" fill="#404040"/><rect x="1.5" y="2" width="6" height="4" fill="#707070"/><rect x="2" y="7" width="5" height="1.5" fill="#303030"/></svg><svg class="a" style="left:528px;top:388px" width="9" height="9"><path d="M4.5,0.5 L8,2 Q8,6.5 4.5,8.5 Q1,6.5 1,2Z" fill="#e8d020" stroke="#606060" stroke-width="0.5"/><rect x="4" y="2.5" width="1" height="3" fill="#000"/></svg><svg class="a" style="left:537px;top:388px" width="9" height="9"><rect x="3" y="1" width="5.5" height="5" fill="#fff" stroke="#2040c0" stroke-width="0.8"/><rect x="0.5" y="4.5" width="3.5" height="4" fill="#303030"/></svg><svg class="a" style="left:547px;top:388px" width="9" height="9"><circle cx="4.5" cy="4.5" r="3.8" fill="#8a8a8a"/><circle cx="4.5" cy="4.5" r="1.3" fill="#d0d0d0"/><path d="M6,6 L8.5,8.5" stroke="#4060c0" stroke-width="1"/></svg><svg class="a" style="left:556px;top:388px" width="9" height="9"><path d="M1,3 L3,3 L6,0.5 L6,8.5 L3,6 L1,6Z" fill="#d04020"/><path d="M7,2 L8.5,7" stroke="#303030" stroke-width="0.6"/></svg><svg class="a" style="left:565px;top:388px" width="9" height="9"><path d="M4.5,0.5 L8.5,8.5 L0.5,8.5Z" fill="#f0c020"/><rect x="0.5" y="5" width="4" height="3.5" fill="#20a040"/><rect x="4.5" y="2" width="4" height="4" fill="#3050d0"/><circle cx="5.5" cy="6.5" r="1.8" fill="#e02020"/></svg><svg class="a" style="left:574px;top:388px" width="9" height="9"><rect x="0.5" y="2" width="4" height="4" fill="#d02020"/><rect x="4" y="0.5" width="4.5" height="4" fill="#c03030"/><circle cx="5" cy="6" r="2.5" fill="#2040c0"/><rect x="3" y="5" width="3" height="3" fill="#20a040"/></svg><svg class="a" style="left:583px;top:388px" width="9" height="9"><rect x="0.5" y="0.5" width="8" height="8" fill="#30a050"/><text x="4.5" y="7" font-size="6" font-weight="bold" text-anchor="middle" fill="#fff" font-family="Liberation Sans">K</text></svg><svg class="a" style="left:592px;top:388px" width="9" height="9"><rect x="0.5" y="0.5" width="8" height="8" fill="#2060c0"/><rect x="2" y="2" width="5" height="4" fill="none" stroke="#c0e0ff" stroke-width="0.6"/></svg><svg class="a" style="left:602px;top:388px" width="9" height="9"><path d="M0.5,2 L4.5,0.5 L8.5,2 L5,5 L5,8.5 L4,8.5 L4,5Z" fill="#f0e020" stroke="#606020" stroke-width="0.4"/></svg><svg class="a" style="left:611px;top:388px" width="9" height="9"><path d="M4.5,0.5 L8,2 Q8,6.5 4.5,8.5 Q1,6.5 1,2Z" fill="#3050b0"/><circle cx="4.5" cy="4.5" r="2.2" fill="#e02020"/><circle cx="4.5" cy="4.5" r="0.8" fill="#fff"/></svg><div class="a txt" style="left:622px;top:389px">17:35</div>
</body></html>
